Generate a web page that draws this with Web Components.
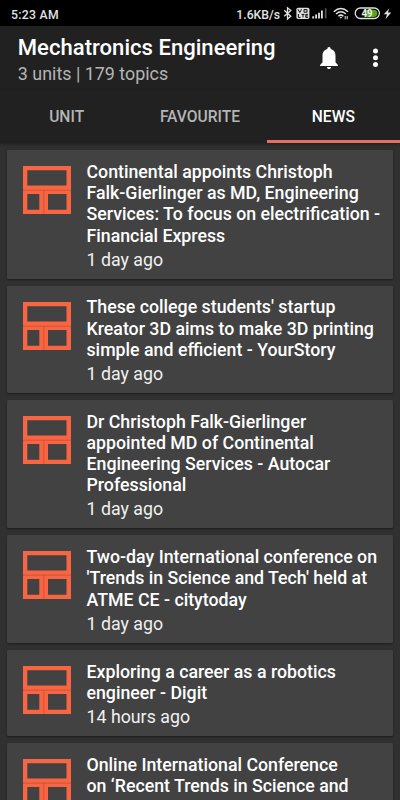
<!DOCTYPE html>
<html lang="en">
<head>
<meta charset="utf-8">
<title>Mechatronics Engineering</title>
<style>
html, body { margin: 0; height: 100%; }
body { height: 800px; overflow: hidden; background: #303030; font-family: Roboto, "Liberation Sans", sans-serif; color: #fff; }
</style>
</head>
<body>
<news-app></news-app>
<script>
function define(name, html) {
  const template = document.createElement('template');
  template.innerHTML = html;
  customElements.define(name, class extends HTMLElement {
    constructor() {
      super();
      this.attachShadow({ mode: 'open' }).append(template.content.cloneNode(true));
    }
  });
}

define('status-bar', `
<style>
:host { display: flex; box-sizing: border-box; height: 26px; background: #000; color: #e2e2e2; padding: 0 0 0 11px; align-items: center; justify-content: space-between; font-size: 12.2px; font-weight: 500; line-height: 16px; }
.time { letter-spacing: .3px; padding-top: 3px; }
.right { display: flex; align-items: center; padding-top: 1px; }
svg { display: block; margin-top: -1px; }
.speed { padding-top: 2px; }
</style>
<span class="time">5:23 AM</span>
<div class="right">
  <span class="speed">1.6KB/s</span>
  <svg width="120" height="26" viewBox="0 0 120 26" fill="none" stroke="#e2e2e2">
    <path d="M4.2 10.2 10.8 16.2 7.5 19V7.8L10.8 10.5 4.2 16.2" stroke-width="1.3"/>
    <rect x="16.4" y="7.7" width="13" height="11.2" rx="1.6" fill="#dedede" stroke="none"/>
    <g stroke="#111" stroke-width="1"><path d="M18 9.2 19.8 12.5 21.6 9.2M24 9.6h3v2.6h-3zM18.4 14v3.4h2.2M21.5 14.4h3M23 14.4v3M28 14.4h-2.2v3H28M26 15.9h1.8"/></g>
    <g stroke="none" fill="#e2e2e2"><path d="M32.3 16.3h1.8V18.4h-1.8zM35.2 14.6H37v3.8h-1.8zM38.1 12.7h1.8v5.7h-1.8zM41 10.5h1.8v7.9H41z"/><path fill="#555" d="M44.8 8.3h1.7v10.1h-1.7z"/></g>
    <g stroke-width="1.5"><path d="M53.8 11.7Q60.8 5.3 68 11.7M56.1 14Q60.8 9.6 65.8 14M58.4 16.2Q60.8 14 63.4 16.2"/></g>
    <path d="M59.6 17.1h2.6l-1.3 1.7z" fill="#e2e2e2" stroke="none"/>
    <path d="M65.2 16v3.3M67.2 16v3.3" stroke-width="1"/>
    <rect x="75.2" y="8" width="24.2" height="10.5" rx="5.2" stroke-width="1.3"/>
    <path d="M86 9.7h7.8a3.6 3.6 0 0 1 0 7.2H86z" fill="#55a51e" stroke="none"/>
    <text x="81.5" y="17" font-size="10.2" font-weight="700" textLength="11" lengthAdjust="spacingAndGlyphs" fill="#f2f2f2" stroke="none">49</text>
    <path d="M109.3 8.4 103.8 14.2h3.2l-1.5 5 5.7-6.6h-3.3z" fill="#e2e2e2" stroke="none"/>
  </svg>
</div>`);

define('app-bar', `
<style>
:host { display: flex; box-sizing: border-box; height: 64px; padding: 9px 20px 0 17.8px; background: #212121; justify-content: space-between; }
.title { font-size: 22.1px; line-height: 25px; font-weight: 500; white-space: nowrap; }
.sub { font-size: 17.9px; line-height: 22px; color: #b5b5b5; padding-top: 3px; white-space: nowrap; }
.actions { display: flex; gap: 33px; height: 46px; align-items: center; }
svg { display: block; fill: #fff; }
</style>
<div><div class="title"><slot name="title"></slot></div><div class="sub"><slot name="subtitle"></slot></div></div>
<div class="actions">
  <svg width="18" height="22" viewBox="0 0 18 22"><path d="M9 0C10.1 0 10.7.8 10.7 2 14.1 2.8 15.5 5.6 15.5 9v6.3L17.9 18v1H.1v-1l2.4-2.7V9C2.5 5.6 3.9 2.8 7.3 2 7.3.8 7.9 0 9 0zM6.8 19.9h4.4C11 21.2 10.1 22 9 22s-2-.8-2.2-2.1z"/></svg>
  <svg width="9" height="22" viewBox="0 0 9 22"><circle cx="4.5" cy="4.1" r="2.5"/><circle cx="4.5" cy="10.8" r="2.5"/><circle cx="4.5" cy="17.4" r="2.5"/></svg>
</div>`);

define('tab-item', `
<style>
:host { flex: 1; display: flex; box-sizing: border-box; align-items: center; justify-content: center; font-size: 15.6px; font-weight: 500; color: #b5b5b5; border-bottom: 3px solid transparent; padding-top: 5px; }
:host([active]) { color: #fff; border-color: #e37060; }
</style><slot></slot>`);

define('tab-bar', `
<style>:host { display: flex; height: 52.6px; background: #212121; box-shadow: 0 1px 3px #0006; position: relative; }</style><slot></slot>`);

define('layout-icon', `
<style>:host { display: block; width: 48px; height: 48px; } svg { display: block; }</style>
<svg width="48" height="48" viewBox="0 0 48 48"><path fill="#f76542" fill-rule="evenodd" d="M0 0h48v48H0zM4.3 4.3v15.3h39.2V4.3zM4.3 28v15.7h12V28zM25 28v15.7h18.5V28z"/><path d="M0 24.2h48M20.9 24.2V48" stroke="#b74a30" stroke-width=".6"/></svg>`);

define('news-card', `
<style>
:host { display: flex; align-items: flex-start; box-sizing: border-box; background: #424242; border-radius: 1.5px; padding: 11.9px 0 8.1px 15.7px; gap: 15.8px; box-shadow: 0 1px 2px #0006; }
layout-icon { margin-top: 4.1px; flex: none; }
.title { font-size: 17.75px; line-height: 21.2px; font-weight: 500; white-space: nowrap; }
.age { font-size: 17.8px; line-height: 22px; margin-top: 1.8px; color: #f0f0f0; }
</style>
<layout-icon></layout-icon>
<div><div class="title"><slot></slot></div><div class="age"><slot name="age"></slot></div></div>`);

define('news-app', `
<style>
:host { display: flex; flex-direction: column; height: 800px; overflow: hidden; }
status-bar, app-bar, tab-bar { flex: none; }
.list { display: flex; flex-direction: column; gap: 6.9px; padding: 7.5px 7px 0; overflow: hidden; flex: 1; min-height: 0; }
news-card { flex: none; }
</style>
<status-bar></status-bar>
<app-bar><span slot="title">Mechatronics Engineering</span><span slot="subtitle">3 units | 179 topics</span></app-bar>
<tab-bar><tab-item>UNIT</tab-item><tab-item>FAVOURITE</tab-item><tab-item active>NEWS</tab-item></tab-bar>
<div class="list">
<news-card>Continental appoints Christoph<br>Falk-Gierlinger as MD, Engineering<br>Services: To focus on electrification -<br>Financial Express<span slot="age">1 day ago</span></news-card>
<news-card>These college students' startup<br>Kreator 3D aims to make 3D printing<br>simple and efficient - YourStory<span slot="age">1 day ago</span></news-card>
<news-card>Dr Christoph Falk-Gierlinger<br>appointed MD of Continental<br>Engineering Services - Autocar<br>Professional<span slot="age">1 day ago</span></news-card>
<news-card>Two-day International conference on<br>'Trends in Science and Tech' held at<br>ATME CE - citytoday<span slot="age">1 day ago</span></news-card>
<news-card>Exploring a career as a robotics<br>engineer - Digit<span slot="age">14 hours ago</span></news-card>
<news-card>Online International Conference<br>on ‘Recent Trends in Science and<span slot="age"></span></news-card>
</div>`);
</script>
</body>
</html>
